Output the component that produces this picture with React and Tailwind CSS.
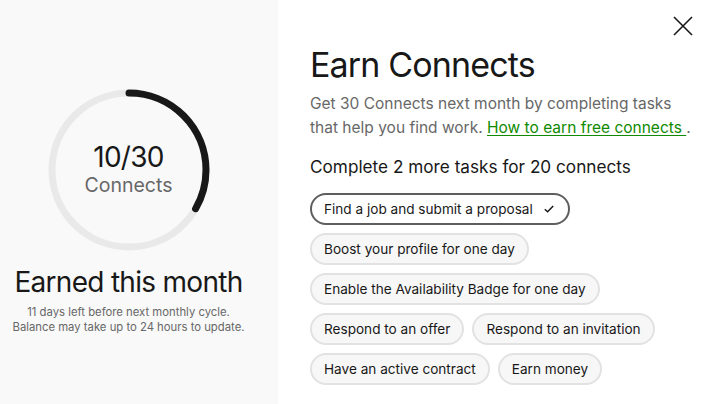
import React from 'react';

const tasks = [
    ['Find a job and submit a proposal'],
    ['Boost your profile for one day'],
    ['Enable the Availability Badge for one day'],
    ['Respond to an offer', 'Respond to an invitation'],
    ['Have an active contract', 'Earn money'],
];

const Ring = () => {
    const r = 77;
    const c = 2 * Math.PI * r;
    return (
        <svg width="162" height="162" viewBox="0 0 162 162" className="absolute inset-0">
            <circle cx="81" cy="81" r={r} fill="none" stroke="#e9e9e9" strokeWidth="7" />
            <circle
                cx="81" cy="81" r={r} fill="none" stroke="#181818" strokeWidth="7"
                strokeLinecap="round"
                strokeDasharray={`${c / 3} ${c}`}
                transform="rotate(-90 81 81)"
            />
        </svg>
    );
};

export default function App() {
    return (
        <div className="flex w-[706px] h-[404px] bg-white text-[#181818]" style={{ fontFamily: 'Inter, "Liberation Sans", sans-serif' }}>
            {/* left summary */}
            <div className="w-[278px] shrink-0 bg-[#f9f9f9]">
                <div className="w-[257px] flex flex-col items-center pt-[89px]">
                    <div className="relative w-[162px] h-[162px] flex flex-col items-center justify-center">
                        <Ring />
                        <div className="text-[28px] leading-[32px] tracking-tight mt-[-3px]">10/30</div>
                        <div className="text-[19.5px] leading-[24px] text-[#676767]">Connects</div>
                    </div>
                    <div className="mt-[13px] text-[28px] leading-[36px] tracking-tight">Earned this month</div>
                    <div className="mt-[5px] text-[11.3px] leading-[15px] text-[#676767] text-center">
                        11 days left before next monthly cycle.<br />
                        Balance may take up to 24 hours to update.
                    </div>
                </div>
            </div>

            {/* right tasks */}
            <div className="flex-1 relative pl-[32px] pt-[44px]">
                <button className="absolute left-[395px] top-[16px] text-[#181818]">
                    <svg width="20" height="20" viewBox="0 0 20 20" fill="none" stroke="#181818" strokeWidth="1.6">
                        <path d="M1 1 L19 19 M19 1 L1 19" />
                    </svg>
                </button>
                <h1 className="text-[34px] leading-[42px] tracking-tight">Earn Connects</h1>
                <p className="mt-[6px] text-[15.5px] leading-[24px] text-[#676767] w-[390px]">
                    Get 30 Connects next month by completing tasks<br />
                    that help you find work.{' '}
                    <a className="text-[#108a00] underline underline-offset-2">How to earn free connects </a>.
                </p>
                <div className="mt-[15px] text-[17.2px] leading-[24px]">Complete 2 more tasks for 20 connects</div>
                <div className="mt-[14px] flex flex-col gap-[8px]">
                    {tasks.map((row, i) => (
                        <div key={i} className="flex gap-[8px]">
                            {row.map((t, j) => {
                                const done = i === 0;
                                return (
                                    <div
                                        key={j}
                                        className={
                                            done
                                                ? 'h-[32px] pl-[12px] pr-[14px] rounded-full border-2 border-[#5e5e5e] bg-white flex items-center gap-[11px] text-[13.6px]'
                                                : 'h-[32px] px-[12px] rounded-full border-2 border-[#e2e2e2] bg-[#f7f7f7] flex items-center text-[13.6px]'
                                        }
                                    >
                                        {t}
                                        {done && (
                                            <svg width="10" height="8" viewBox="0 0 10 8" fill="none" stroke="#181818" strokeWidth="1.5">
                                                <path d="M0.8 4.2 L3.6 6.8 L9.2 1" />
                                            </svg>
                                        )}
                                    </div>
                                );
                            })}
                        </div>
                    ))}
                </div>
            </div>
        </div>
    );
}
